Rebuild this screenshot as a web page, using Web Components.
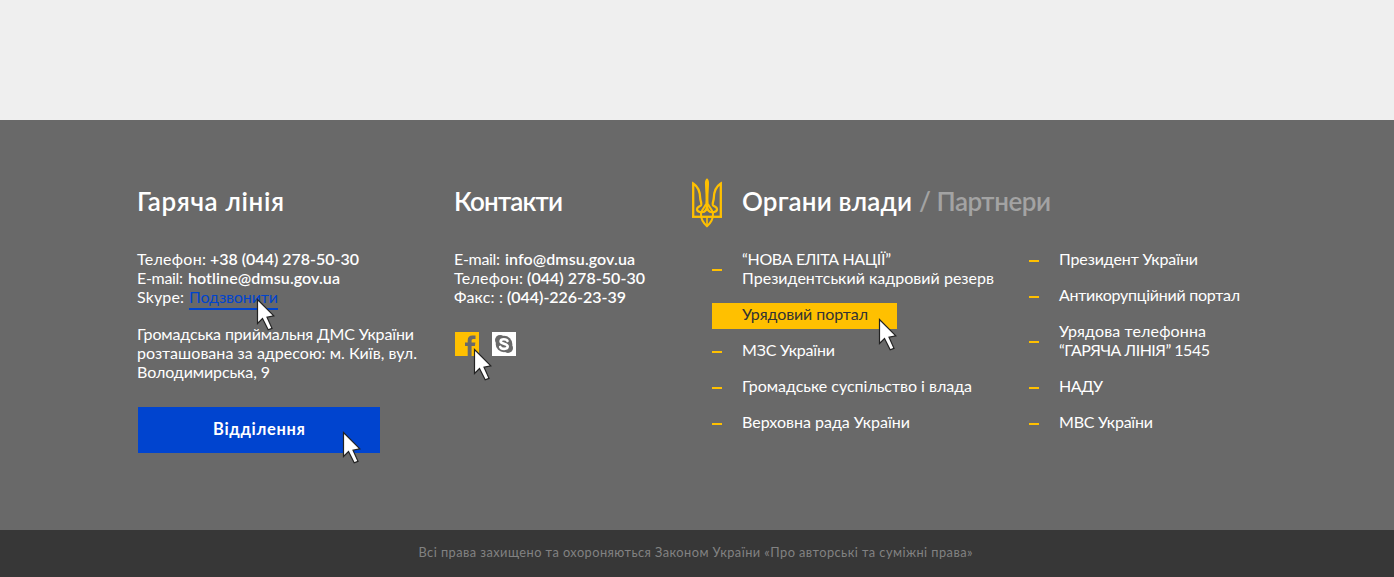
<!DOCTYPE html>
<html lang="uk">
<head>
<meta charset="utf-8">
<title>ДМС України</title>
<style>
body{margin:0;background:#efefef;font-family:Lato,"Noto Sans",sans-serif}
</style>
</head>
<body>
<site-page></site-page>
<script>
const define = (name, html, setup) => customElements.define(name, class extends HTMLElement {
  connectedCallback() {
    if (this.shadowRoot) return;
    this.attachShadow({mode: 'open'}).innerHTML = html;
    if (setup) setup(this, this.shadowRoot);
  }
});

// A single line tracked so that it fills the given width.
define('text-run', `<style>:host{display:inline-block;white-space:pre;vertical-align:baseline}
:host([strong]){font-weight:600}</style><slot></slot>`, el => {
  const want = +el.getAttribute('w');
  const n = el.textContent.length;
  const have = el.getBoundingClientRect().width;
  if (want && n > 1) {
    const ls = (want - have) / (n - 1);
    el.style.letterSpacing = ls + 'px';
    el.style.marginRight = -ls + 'px';
  }
});

define('mouse-pointer', `<style>:host{position:absolute;width:19px;height:33px;z-index:2;pointer-events:none}svg{display:block}</style>
<svg width="19" height="33" viewBox="-1 -1 19 33"><path d="M.5 .5V24.5L5.5 19.5L11.2 30.8L15 29.3L10 18.2L16.8 16.8Z" fill="#fff" stroke="#222" stroke-width="1.2"/></svg>`);

define('trident-icon', `<style>:host{display:block;width:30px;height:50px}svg{display:block}</style>
<svg width="30" height="50" viewBox="0 0 30 50"><g fill="none" stroke="#ffc000" stroke-width="2.3">
<path d="M1.2 38.8V5.5C6 8.5 8 14 8.2 20C8.3 23 9.8 24.6 9.2 26.8C8.5 28.8 5.2 28.6 5 31.2C5 33.4 7.2 34 10 34.2C13.4 34.2 15 31.5 15 27"/>
<path d="M28.8 38.8V5.5C24 8.5 22 14 21.8 20C21.7 23 20.2 24.6 20.8 26.8C21.5 28.8 24.8 28.6 25 31.2C25 33.4 22.8 34 20 34.2C16.6 34.2 15 31.5 15 27"/>
<path d="M0 38.8H30"/>
<path d="M14 26C13.4 29 9.6 31 9 35.5C8.6 41 11 44.6 15 48.2C19 44.6 21.4 41 21 35.5C20.4 31 16.6 29 16 26" stroke-width="2"/>
<path d="M15 38V48" stroke-width="1.6"/></g>
<path d="M15 .3C13 1.8 12.8 4 13 7C13.2 13 14 19 13.3 27H16.7C16 19 16.8 13 17 7C17.2 4 17 1.8 15 .3Z" fill="#ffc000"/></svg>`);

define('facebook-icon', `<style>:host{display:block;width:24px;height:24px}svg{display:block}</style>
<svg width="24" height="24"><path fill="#ffc000" d="M0 0H24V24H0Z"/><path fill="#696969" d="M12.7 24V14H10V10.5H12.7V8.4C12.7 5 14.4 3.5 17.3 3.5H20.5V7H18.3C17 7 16.6 7.7 16.6 8.8V10.5H20.4L19.9 14H16.6V24Z"/></svg>`);

define('skype-icon', `<style>:host{display:block;width:24px;height:24px}svg{display:block}</style>
<svg width="24" height="24"><path fill="#fff" d="M0 0H24V24H0Z"/><g fill="#696969"><circle cx="12" cy="12" r="8.3"/><circle cx="8.1" cy="8.1" r="5.1"/><circle cx="15.9" cy="15.9" r="5.1"/></g>
<path fill="none" stroke="#fff" stroke-width="2.6" stroke-linecap="round" d="M15.5 9C14.7 6.9 8.8 6.4 8.6 9.3C8.5 12.2 15.7 11.2 15.7 14.5C15.6 17.6 9.1 17.6 8.2 14.9"/></svg>`);

define('footer-section', `<style>:host{display:block}header{height:29px;padding-top:1px;margin-bottom:34px;font:600 26px/30px Lato,"Noto Sans",sans-serif;white-space:nowrap}</style>
<header><slot name="title"></slot></header><slot></slot>`);

define('link-item', `<style>:host{display:flex;align-items:center;margin-bottom:17px;line-height:19px;white-space:nowrap}
i{flex:none;width:10px;height:2px;margin:4px 20px 0 0;background:#ffc000}
:host([active]){position:relative;width:185px;height:26px;margin:-1px 0 11px;background:#ffc000;color:#333}
:host([active]) i{visibility:hidden}
div{display:flex;flex-direction:column;align-items:flex-start}:host([active]) div{margin-top:-5px}</style><i></i><div><slot></slot></div>`);

define('main-button', `<style>:host{display:block;position:relative;width:242px}
button{display:block;width:100%;height:46px;border:0;padding:0 0 2px;background:#0044cf;color:#fff;font:700 16.5px/19px Lato,"Noto Sans",sans-serif}</style>
<button><slot></slot></button><slot name="pointer"></slot>`);

define('site-page', `<style>
:host{display:flex;flex-direction:column;height:577px;overflow:hidden;color:#fff;font-size:16px;line-height:19px}
.top{height:120px}
footer{height:410px;box-sizing:border-box;padding:65px 0 0 137px;background:#696969;display:grid;grid-template-columns:317px 238px 1fr;align-items:start}
.line{height:19px;white-space:nowrap}
.call{position:relative;color:#0044cf;display:inline-block;height:21px;border-bottom:2px solid #0044cf}
.address{margin:18px 0 26px}
main-button{margin-left:1px}
.social{display:flex;gap:13px;margin:26px 0 0 1px}.fb{position:relative}
.power{display:grid;grid-template-columns:20px 1fr}
.power trident-icon{margin-top:-7px}
.heading{margin-left:30px}.muted{color:#a3a3a3}
.lists{display:grid;grid-template-columns:317px 1fr}
.bar{flex:1;background:#373737;color:#828282;font-size:12.8px;text-align:center;padding:13px 3px 0 0}
</style>
<div class="top"></div>
<footer>
<footer-section><text-run slot="title" w="147">Гаряча лінія</text-run>
<div class="line"><text-run w="69">Телефон:</text-run><text-run strong w="149" style="margin-left:4px">+38 (044) 278-50-30</text-run></div>
<div class="line"><text-run w="46">E-mail:</text-run><text-run strong w="152" style="margin-left:5px">hotline@dmsu.gov.ua</text-run></div>
<div class="line"><text-run w="47">Skype:</text-run><span class="call" style="margin-left:5px"><text-run w="89">Подзвонити</text-run><mouse-pointer style="left:67px;top:11px"></mouse-pointer></span></div>
<div class="address"><div class="line"><text-run w="277">Громадська приймальня ДМС України</text-run></div>
<div class="line"><text-run w="280">розташована за адресою: м. Київ, вул.</text-run></div>
<div class="line"><text-run w="133">Володимирська, 9</text-run></div></div>
<main-button><text-run w="92">Відділення</text-run><mouse-pointer slot="pointer" style="left:204px;top:24px"></mouse-pointer></main-button>
</footer-section>
<footer-section><text-run slot="title" w="109">Контакти</text-run>
<div class="line"><text-run w="46">E-mail:</text-run><text-run strong w="130" style="margin-left:5px">info@dmsu.gov.ua</text-run></div>
<div class="line"><text-run w="69">Телефон:</text-run><text-run strong w="118" style="margin-left:4px">(044) 278-50-30</text-run></div>
<div class="line"><text-run w="49">Факс: :</text-run><text-run strong w="119" style="margin-left:4px">(044)-226-23-39</text-run></div>
<div class="social"><div class="fb"><facebook-icon></facebook-icon><mouse-pointer style="left:18px;top:16px"></mouse-pointer></div><skype-icon></skype-icon></div>
</footer-section>
<div class="power"><trident-icon></trident-icon>
<footer-section><div slot="title" class="heading"><text-run w="170">Органи влади</text-run><text-run class="muted" w="132" style="margin-left:7px">/ Партнери</text-run></div>
<div class="lists"><nav>
<link-item><text-run w="149">“НОВА ЕЛІТА НАЦІЇ”</text-run><text-run w="252">Президентський кадровий резерв</text-run></link-item>
<link-item active><text-run w="126">Урядовий портал</text-run><mouse-pointer style="left:166px;top:15px"></mouse-pointer></link-item>
<link-item><text-run w="93">МЗС України</text-run></link-item>
<link-item><text-run w="230">Громадське суспільство і влада</text-run></link-item>
<link-item><text-run w="168">Верховна рада України</text-run></link-item></nav>
<nav><link-item><text-run w="139">Президент України</text-run></link-item>
<link-item><text-run w="181">Антикорупційний портал</text-run></link-item>
<link-item><text-run w="147">Урядова телефонна</text-run><text-run w="151">“ГАРЯЧА ЛІНІЯ” 1545</text-run></link-item>
<link-item><text-run w="44">НАДУ</text-run></link-item>
<link-item><text-run w="94">МВС України</text-run></link-item></nav></div>
</footer-section></div>
</footer>
<div class="bar"><text-run w="554">Всі права захищено та охороняються Законом України «Про авторські та суміжні права»</text-run></div>`);
</script>
</body>
</html>
